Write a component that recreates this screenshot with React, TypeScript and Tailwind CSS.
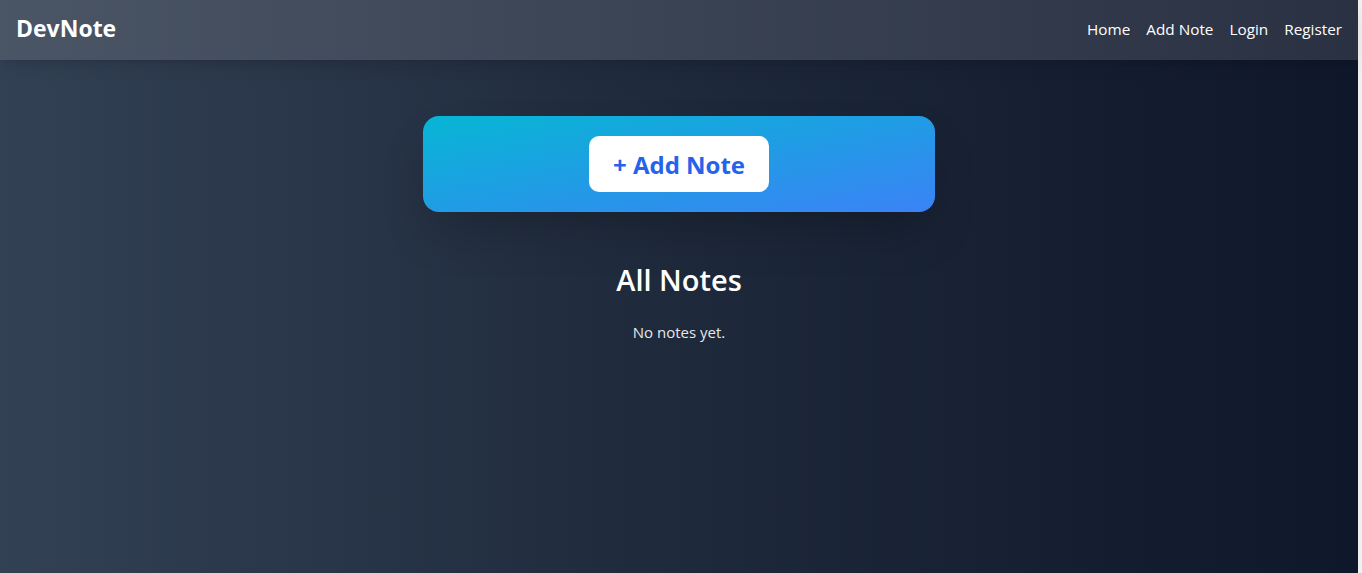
export default function App() {
  return (
    <div className="flex h-[573px] w-full overflow-hidden" style={{ fontFamily: '"Open Sans", "Noto Sans", sans-serif' }}>
      <div className="flex flex-1 flex-col bg-[linear-gradient(to_right,#334155,#1e293b,#0f172a)]">
        <nav className="relative z-10 flex h-[60px] items-center justify-between bg-[linear-gradient(to_right,#4a5566,#2a3142)] px-4 pb-1 shadow-lg">
          <h1 className="text-[23px] font-bold text-white">DevNote</h1>
          <div className="flex gap-4 pt-0.5 text-[15.3px] text-white">
            <a href="#">Home</a>
            <a href="#">Add Note</a>
            <a href="#">Login</a>
            <a href="#">Register</a>
          </div>
        </nav>
        <main className="flex flex-col items-center pt-14">
          <div className="flex w-[512px] justify-center rounded-2xl bg-[linear-gradient(to_bottom_right,#06b6d4,#3b82f6)] p-5 shadow-2xl">
            <button className="rounded-[10px] bg-white px-6 pt-[13px] pb-[11px] text-[24px] leading-8 font-bold text-[#2563eb]">
              + Add Note
            </button>
          </div>
          <h2 className="mt-12 text-[29px] leading-10 font-semibold text-white">All Notes</h2>
          <p className="mt-5 text-[15px] leading-6 text-gray-200">No notes yet.</p>
        </main>
      </div>
      <div className="w-1 bg-[#f0f0f0]" />
    </div>
  );
}
